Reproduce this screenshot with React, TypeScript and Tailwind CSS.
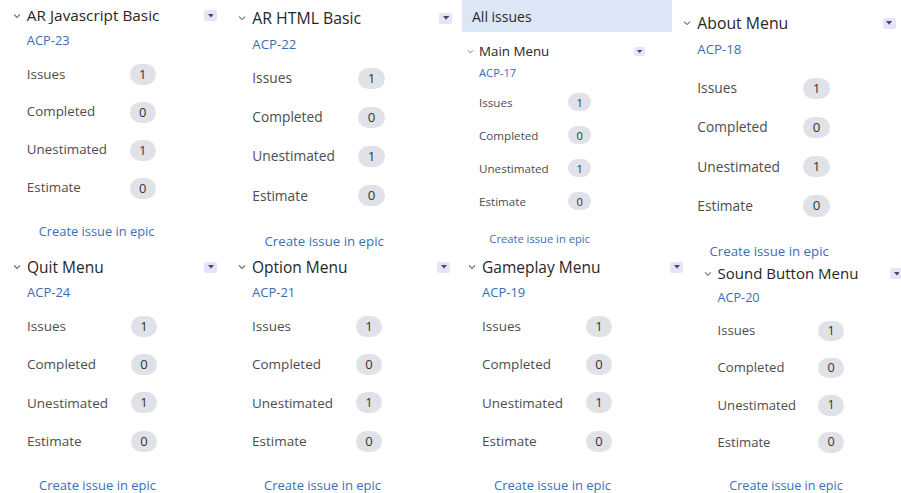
import React from "react";

type Stat = { label: string; value: number };

const stats: Stat[] = [
  { label: "Issues", value: 1 },
  { label: "Completed", value: 0 },
  { label: "Unestimated", value: 1 },
  { label: "Estimate", value: 0 },
];

function Chevron() {
  return (
    <span className="flex w-[14px] shrink-0 items-center">
      <svg width="8" height="6" viewBox="0 0 8 6" fill="none">
        <polyline points="1,1.5 4,4.5 7,1.5" stroke="#6e6e6e" strokeWidth="1.1" />
      </svg>
    </span>
  );
}

function DropButton() {
  return (
    <span className="ml-auto flex h-[11px] w-[13px] shrink-0 items-center justify-center rounded-[2px] bg-[#e7e4f9]">
      <svg width="6" height="4" viewBox="0 0 6 4">
        <polygon points="0,0 6,0 3,3.6" fill="#3c4a6e" />
      </svg>
    </span>
  );
}

type EpicProps = {
  title: string;
  code: string;
  width: string;
  rowsGap?: string;
};

function Epic({ title, code, width, rowsGap = "mt-[6px]" }: EpicProps) {
  return (
    <div className={width}>
      <div className="flex h-[20px] items-center">
        <Chevron />
        <span className="whitespace-nowrap text-[15.5px] leading-[20px] text-[#262626]">{title}</span>
        <DropButton />
      </div>
      <div className="mt-[6px] pl-[14px] text-[13px] leading-[18px] text-[#3a6db3]">{code}</div>
      <div className={`${rowsGap} pl-[14px]`}>
        {stats.map((s) => (
          <div key={s.label} className="flex h-[38.3px] items-center">
            <span className="w-[104px] text-[13.5px] leading-[18px] text-[#4d4d4d]">{s.label}</span>
            <span className="flex h-[21px] w-[26px] items-center justify-center rounded-full bg-[#e0e2e8] text-[13px] leading-none text-[#333333]">
              {s.value}
            </span>
          </div>
        ))}
      </div>
      <div className="mt-[17px] whitespace-nowrap pl-[26px] text-[13px] leading-[16px] text-[#3b70b5]">
        Create issue in epic
      </div>
    </div>
  );
}

export default function App() {
  return (
    <div
      className="grid h-[493px] w-[901px] grid-cols-[230px_230px_220px_221px] grid-rows-[245px_248px] overflow-hidden bg-white"
      style={{ fontFamily: '"Open Sans", "Noto Sans", sans-serif' }}
    >
      <div className="pl-[13px] pt-[6px]">
        <div className="[zoom:0.99]">
          <Epic title="AR Javascript Basic" code="ACP-23" width="w-[206px]" />
        </div>
      </div>
      <div className="pl-[8px] pt-[8px]">
        <div className="[zoom:1.02]">
          <Epic title="AR HTML Basic" code="ACP-22" width="w-[210px]" />
        </div>
      </div>
      <div>
        <div className="ml-[2px] flex h-[32px] w-[210px] items-center bg-[#dbe6f6] pl-[10px] text-[14px] text-[#2a2a2a]">
          All issues
        </div>
        <div className="pl-[7px] pt-[11px]">
          <div className="[zoom:0.86]">
            <Epic title="Main Menu" code="ACP-17" width="w-[207px]" />
          </div>
        </div>
      </div>
      <div className="pl-[3px] pt-[13px]">
        <div className="[zoom:1.02]">
          <Epic title="About Menu" code="ACP-18" width="w-[209px]" rowsGap="mt-[11px]" />
        </div>
      </div>

      <div className="pl-[13px] pt-[12px]">
        <div className="[zoom:1]">
          <Epic title="Quit Menu" code="ACP-24" width="w-[204px]" />
        </div>
      </div>
      <div className="pl-[8px] pt-[12px]">
        <div className="[zoom:1]">
          <Epic title="Option Menu" code="ACP-21" width="w-[212px]" />
        </div>
      </div>
      <div className="pl-[8px] pt-[12px]">
        <div className="[zoom:1]">
          <Epic title="Gameplay Menu" code="ACP-19" width="w-[215px]" />
        </div>
      </div>
      <div className="pl-[24px] pt-[19px]">
        <div className="[zoom:0.97]">
          <Epic title="Sound Button Menu" code="ACP-20" width="w-[205px]" />
        </div>
      </div>
    </div>
  );
}
